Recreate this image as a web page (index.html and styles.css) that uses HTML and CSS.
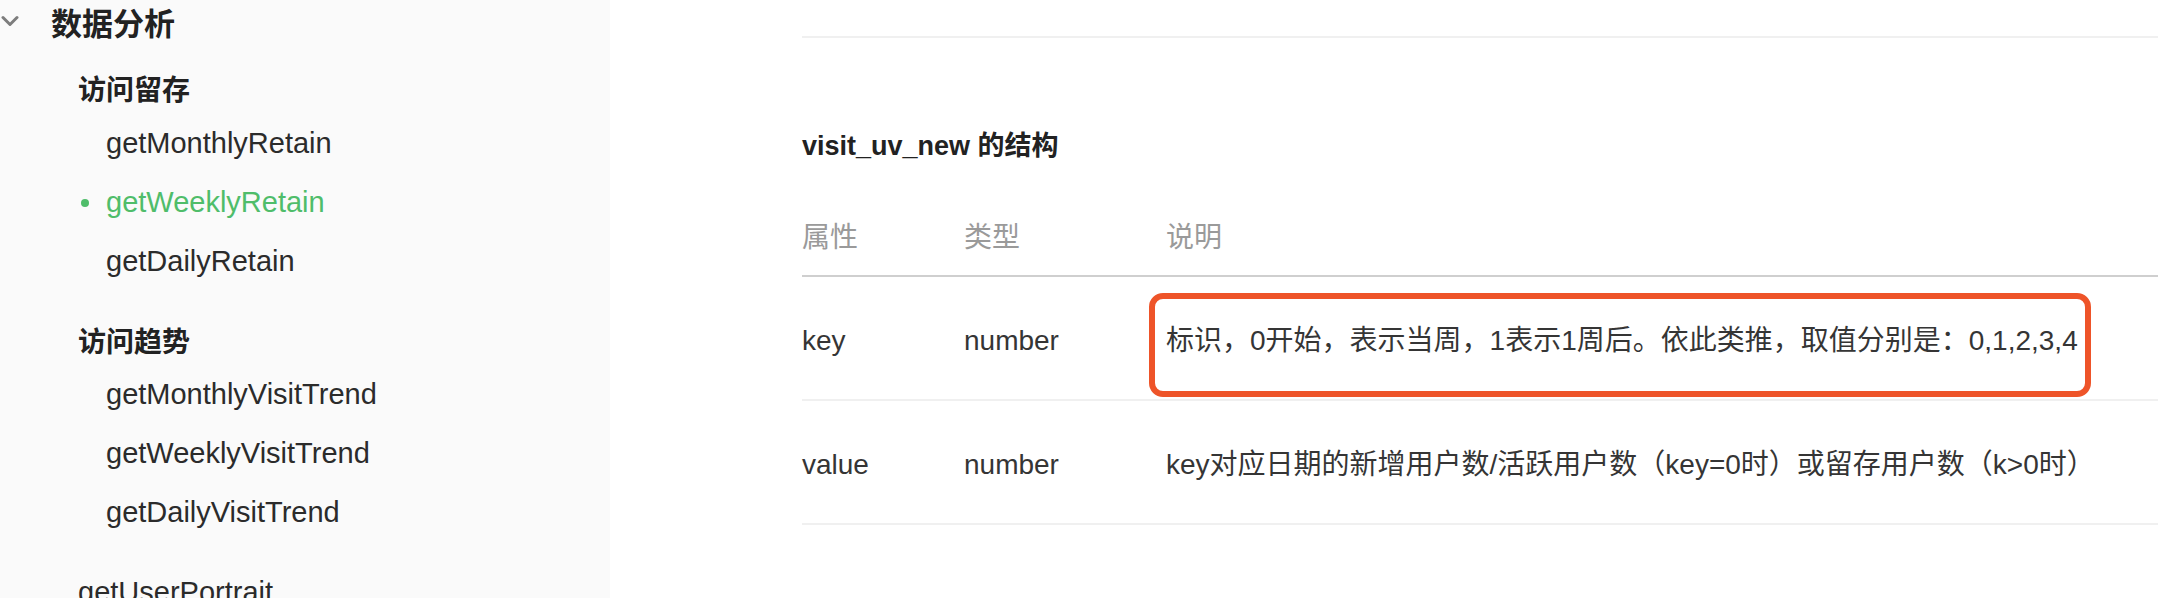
FILE: index.html
```html
<!DOCTYPE html>
<html lang="zh-CN">
<head>
<meta charset="utf-8">
<title>visit_uv_new</title>
<link rel="stylesheet" href="styles.css">
</head>
<body>
<div class="page">
  <aside class="sidebar">
    <div class="group-title">
      <svg class="chevron" width="18" height="12" viewBox="0 0 18 12"><path d="M2 2.5 L9 9.5 L16 2.5" fill="none" stroke="#7d7d7d" stroke-width="3" stroke-linecap="round" stroke-linejoin="round"/></svg>
      <span>数据分析</span>
    </div>
    <div class="cat">访问留存</div>
    <ul class="items">
      <li>getMonthlyRetain</li>
      <li class="active">getWeeklyRetain</li>
      <li>getDailyRetain</li>
    </ul>
    <div class="cat cat-2">访问趋势</div>
    <ul class="items">
      <li>getMonthlyVisitTrend</li>
      <li>getWeeklyVisitTrend</li>
      <li>getDailyVisitTrend</li>
    </ul>
    <div class="link">getUserPortrait</div>
  </aside>
  <main class="main">
    <div class="prev-end"></div>
    <h3 class="heading">visit_uv_new 的结构</h3>
    <table class="struct">
      <thead>
        <tr><th class="c1">属性</th><th class="c2">类型</th><th class="c3">说明</th></tr>
      </thead>
      <tbody>
        <tr>
          <td>key</td>
          <td>number</td>
          <td class="marked">标识，0开始，表示当周，1表示1周后。依此类推，取值分别是：0,1,2,3,4<span class="highlight"></span></td>
        </tr>
        <tr>
          <td>value</td>
          <td>number</td>
          <td>key对应日期的新增用户数/活跃用户数（key=0时）或留存用户数（k&gt;0时）</td>
        </tr>
      </tbody>
    </table>
  </main>
</div>
</body>
</html>
```

FILE: styles.css
```css
* { box-sizing: border-box; }
html, body { margin: 0; padding: 0; background: #fff; }
body {
  font-family: "Liberation Sans", "Noto Sans CJK SC", sans-serif;
  color: #333;
  overflow: hidden;
}
.page {
  display: flex;
  width: 2158px;
  height: 598px;
  overflow: hidden;
}
.sidebar {
  width: 610px;
  flex: none;
  background: #fafafa;
  height: 598px;
  overflow: hidden;
}
.group-title {
  display: flex;
  align-items: center;
  height: 42px;
  font-size: 31px;
  font-weight: 600;
  color: #222;
}
.chevron {
  margin-left: 1px;
  margin-right: 32px;
  flex: none;
}
.cat {
  margin-top: 26px;
  padding-left: 78px;
  height: 46px;
  line-height: 46px;
  font-size: 28px;
  font-weight: 700;
  color: #222;
}
.cat-2 {
  margin-top: 30px;
  height: 44px;
  line-height: 44px;
}
.items {
  list-style: none;
  margin: 0;
  padding: 0;
}
.items li {
  height: 59px;
  line-height: 59px;
  padding-left: 106px;
  font-size: 29px;
  color: #2b2b2b;
  display: flex;
  align-items: center;
}
.items li.active {
  color: #4fbd6a;
}
.items li.active::before {
  content: "";
  width: 8px;
  height: 8px;
  border-radius: 50%;
  background: #4fbd6a;
  margin-left: -25px;
  margin-right: 17px;
}
.link {
  margin-top: 27px;
  padding-left: 78px;
  height: 46px;
  line-height: 46px;
  font-size: 29px;
  color: #2b2b2b;
}
.main {
  flex: 1;
  padding-left: 192px;
  min-width: 0;
}
.prev-end {
  height: 38px;
  border-bottom: 2px solid #f0f0f0;
}
.heading {
  margin: 88px 0 0 0;
  height: 40px;
  line-height: 40px;
  font-size: 27px;
  font-weight: 700;
  color: #222;
}
.struct {
  margin-top: 31px;
  width: 100%;
  border-collapse: collapse;
  table-layout: fixed;
  font-size: 28px;
}
.struct th {
  text-align: left;
  font-weight: 400;
  color: #9a9a9a;
  line-height: 40px;
  padding: 21px 0 17px;
  border-bottom: 2px solid #cfcfcf;
}
.struct th.c1 { width: 162px; }
.struct th.c2 { width: 202px; }
.struct td {
  line-height: 40px;
  padding: 44px 0 38px;
  border-bottom: 2px solid #f0f0f0;
  color: #353535;
  white-space: nowrap;
}
.struct td.marked { position: relative; }
.highlight {
  position: absolute;
  left: -17px;
  top: 16px;
  width: 942px;
  height: 104px;
  border: 6px solid #ee5429;
  border-radius: 14px;
}
```
